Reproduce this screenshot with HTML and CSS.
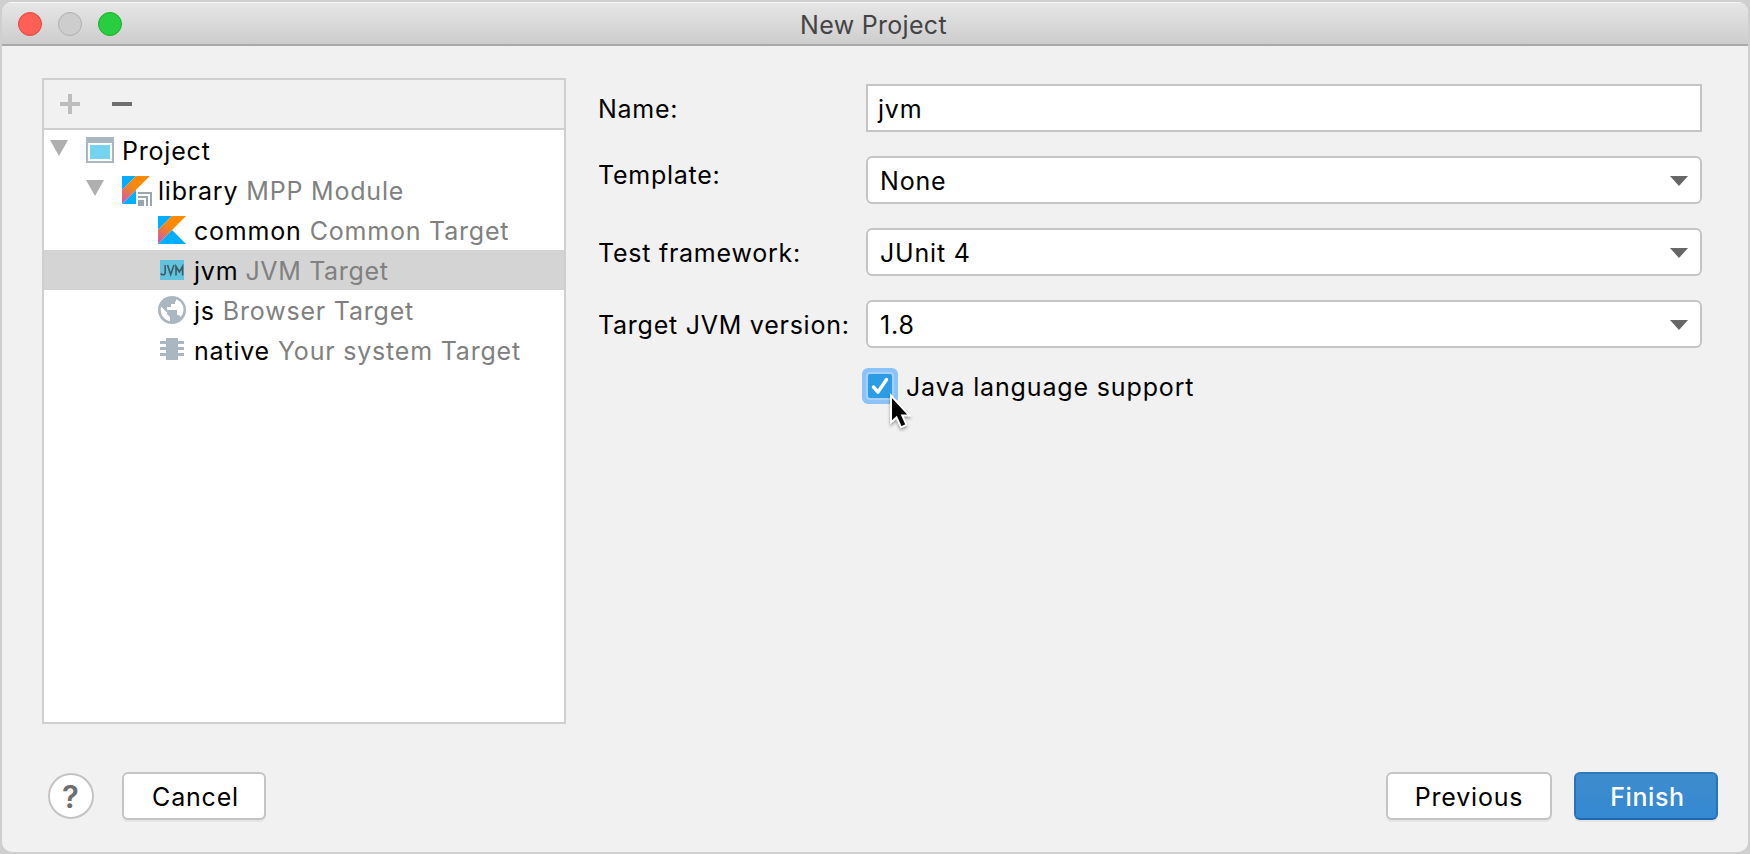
FILE: index.html
```
<!DOCTYPE html>
<html lang="en">
<head>
<meta charset="utf-8">
<title>New Project</title>
<link rel="stylesheet" href="styles.css">
</head>
<body>
<svg class="defs" width="0" height="0">
  <defs>
    <linearGradient id="kt" gradientUnits="userSpaceOnUse" x1="0" y1="28" x2="20" y2="4">
      <stop offset="0" stop-color="#c757bc"/><stop offset="0.1" stop-color="#cd5ca9"/><stop offset="0.4" stop-color="#e8744f"/><stop offset="0.68" stop-color="#f88909"/><stop offset="1" stop-color="#ff8900"/>
    </linearGradient>
  </defs>
</svg>
<div class="window">
  <header class="titlebar">
    <div class="lights"><i class="light close"></i><i class="light minimize"></i><i class="light zoom"></i></div>
    <h1 class="title">New Project</h1>
  </header>
  <main class="content">
    <section class="panel">
      <div class="toolbar">
        <svg width="20" height="20"><path d="M8 0h4v8h8v4h-8v8H8v-8H0V8h8z" fill="#bdbdbd"/></svg>
        <svg width="20" height="20"><path d="M0 8h20v4H0z" fill="#6e6e6e"/></svg>
      </div>
      <ul class="tree">
        <li class="row root">
          <svg class="arrow" width="18" height="16"><path d="M0 0h18L9 16z" fill="#afafaf"/></svg>
          <svg class="icon" width="28" height="28"><path d="M0 1h28v26H0z" fill="#aab7c0"/><path d="M2 7h24v18H2z" fill="#fff"/><path d="M4 9h20v14H4z" fill="#76d3ee"/></svg>
          <span class="name">Project</span>
        </li>
        <li class="row module">
          <svg class="arrow" width="18" height="16"><path d="M0 0h18L9 16z" fill="#afafaf"/></svg>
          <svg class="icon" width="30" height="30"><path d="M0 0h14L0 14z" fill="#00afff"/><path d="M0 28l14-14v14z" fill="#00afff"/><path d="M14 0h14L14 14 0 28V14z" fill="url(#kt)"/><path d="M14 14h16v16H14z" fill="#fff"/><path d="M14 14L28 0h2v14z" fill="#fff"/><path d="M16 16h14v14h-2V18H16zM16 20h10v10h-2v-8h-8zM16 24h6v6h-6z" fill="#9aa7b0"/></svg>
          <span class="name">library</span><span class="kind">MPP Module</span>
        </li>
        <li class="row target">
          <svg class="icon" width="28" height="28"><path d="M0 0h14L0 14z" fill="#00afff"/><path d="M0 28l14-14 14 14z" fill="#00afff"/><path d="M14 0h14L14 14 0 28V14z" fill="url(#kt)"/></svg>
          <span class="name">common</span><span class="kind">Common Target</span>
        </li>
        <li class="row target selected">
          <svg class="icon" width="28" height="28"><path d="M2 4h24v20H2z" fill="#62c3de"/><path d="M7.200 9v7.500q0 2.300-2.200 2.300-1.500 0-2.200-1.300M9.500 9l3.200 9.500L16 9M18 19.500V10.500l3.300 5.500 3.300-5.500v9" fill="none" stroke="#3f5a63" stroke-width="1.600"/></svg>
          <span class="name">jvm</span><span class="kind">JVM Target</span>
        </li>
        <li class="row target">
          <svg class="icon" width="28" height="28"><circle cx="14" cy="14" r="14" fill="#aab7c0"/><path d="M3 10.500l6 6V18l3 3v4.300C6 24 1.500 18 3 10.500zM18 3.300c5.500 2 8.300 7 7.300 12.200-.5 2.500-1.500 4.200-2.800 5.500-.5-1.500-1.500-2-3.500-2V14H9v-3h4V8h4V5.500h1z" fill="#fff"/></svg>
          <span class="name">js</span><span class="kind">Browser Target</span>
        </li>
        <li class="row target">
          <svg class="icon" width="28" height="28"><path d="M8 2h12v22H8zM2 5h6v3H2zM2 11h6v3H2zM2 17h6v3H2zM20 5h6v3h-6zM20 11h6v3h-6zM20 17h6v3h-6z" fill="#aab7c0"/></svg>
          <span class="name">native</span><span class="kind">Your system Target</span>
        </li>
      </ul>
    </section>
    <section class="form">
      <label>Name:</label><div class="field input">jvm</div>
      <label class="raised">Template:</label><div class="field select">None<svg width="18" height="10"><path d="M0 0h18L9 10z" fill="#666"/></svg></div>
      <label>Test framework:</label><div class="field select">JUnit 4<svg width="18" height="10"><path d="M0 0h18L9 10z" fill="#666"/></svg></div>
      <label>Target JVM version:</label><div class="field select">1.8<svg width="18" height="10"><path d="M0 0h18L9 10z" fill="#666"/></svg></div>
      <div class="option">
        <span class="checkbox"><svg width="24" height="24"><path d="M5.500 13l4.500 5L18.500 5.500" fill="none" stroke="#fff" stroke-width="3.400" stroke-linecap="round" stroke-linejoin="round"/></svg></span>
        <span class="optionText">Java language support</span>
        <svg class="cursor" width="30" height="44" viewBox="0 0 30 44"><path d="M2 3.500v27l5.500-5 4.500 9.800 5.500-2.500-4.200-9.300h7.200z" fill="#000" stroke="#fff" stroke-width="2"/></svg>
      </div>
    </section>
  </main>
  <footer class="footer">
    <div class="help">?</div>
    <div class="button cancel">Cancel</div>
    <div class="button previous">Previous</div>
    <div class="button finish">Finish</div>
  </footer>
</div>
</body>
</html>
```
FILE: styles.css
```
* { box-sizing: border-box; }
body { margin: 0; background: #cfcfcf; font-family: Inter, "Liberation Sans", sans-serif; font-size: 25px; letter-spacing: 0.8px; color: #000; }
svg { display: block; flex: none; }
.defs { position: absolute; }
.window { display: flex; flex-direction: column; width: 1750px; height: 854px; border: 2px solid #cfcfcf; border-radius: 12px; background: #f1f1f1; overflow: hidden; }
.titlebar { display: grid; grid-template-columns: 1fr auto 1fr; align-items: center; height: 44px; border-top: 1px solid #f5f5f5; border-bottom: 2px solid #a9a9a9; background: linear-gradient(#e6e6e6, #cdcdcd); }
.lights { display: flex; gap: 16px; padding-left: 16px; }
.light { width: 24px; height: 24px; border-radius: 50%; border: 1px solid; }
.close { background: #ff5f57; border-color: #e2463f; }
.minimize { background: #cdcdcd; border-color: #afafaf; }
.zoom { background: #28cd41; border-color: #1dad2b; }
.title { margin: 0; padding: 2px 3px 0 0; font-size: 25px; font-weight: 400; letter-spacing: 0.3px; line-height: 38px; color: #444; }
.content { display: flex; height: 678px; padding: 32px 46px 0 40px; gap: 32px; }
.panel { width: 524px; height: 646px; border: 2px solid #cfcfcf; background: #fff; }
.toolbar { display: flex; align-items: center; gap: 32px; height: 50px; padding-left: 16px; border-bottom: 2px solid #cfcfcf; background: #f1f1f1; }
.tree { margin: 0; padding: 0; list-style: none; }
.row { display: flex; align-items: center; height: 40px; white-space: nowrap; }
.row .icon { margin-right: 8px; }
.root { padding-left: 6px; }
.module { padding-left: 42px; }
.target { padding-left: 114px; }
.arrow { margin-right: 18px; margin-bottom: 4px; }
.module .icon { margin-right: 6px; margin-top: 2px; }
.selected { background: #d4d4d4; }
.name, .kind { padding-top: 2px; line-height: 38px; }
.kind { margin-left: 8px; color: #808080; }
.selected .kind { margin-left: 7px; letter-spacing: 0.65px; }
.form { display: grid; grid-template-columns: 268px 1fr; grid-template-rows: 48px 48px 48px 48px 40px; row-gap: 24px; flex: 1; padding-top: 6px; white-space: nowrap; }
.form label { line-height: 48px; padding-top: 1px; letter-spacing: 0.75px; }
.form .raised { line-height: 36px; }
.field { display: flex; align-items: center; justify-content: space-between; height: 48px; padding: 2px 12px 0 10px; border: 2px solid #c4c4c4; background: #fff; }
.select { border-radius: 6px; padding-left: 12px; }
.option { grid-column: 2; position: relative; display: flex; align-items: center; height: 36px; margin-top: -4px; padding-left: 2px; gap: 14px; }
.checkbox { width: 24px; height: 24px; border-radius: 2px; background: #2d9ce6; box-shadow: 0 0 0 2px #a9d0fa, 0 0 0 6px #8bc2f9; }
.optionText { padding-top: 2px; letter-spacing: 0.85px; }
.cursor { position: absolute; left: 23px; top: 24px; filter: drop-shadow(0 2px 1.500px rgba(0,0,0,.35)); }
.footer { display: flex; align-items: center; height: 48px; margin-top: 48px; padding: 0 30px 0 46px; }
.help { width: 46px; height: 46px; padding-right: 1px; border: 2px solid #c4c4c4; border-radius: 50%; background: #fff; color: #6e6e6e; font-size: 31px; font-weight: 600; line-height: 43px; letter-spacing: 0; text-align: center; }
.button { height: 48px; border: 2px solid #c4c4c4; border-radius: 6px; background: #fff; box-shadow: 0 2px 0 #e4e4e4; line-height: 46px; text-align: center; }
.cancel { width: 144px; margin-left: 28px; padding-left: 3px; }
.previous { width: 166px; margin-left: auto; }
.finish { width: 144px; margin-left: 22px; padding-left: 3px; color: #fff; font-weight: 500; letter-spacing: 0.6px; border-color: #2f78b9 #2a72b5 #1f69b1; background: linear-gradient(#3f8ccd, #3489d2); }
```
